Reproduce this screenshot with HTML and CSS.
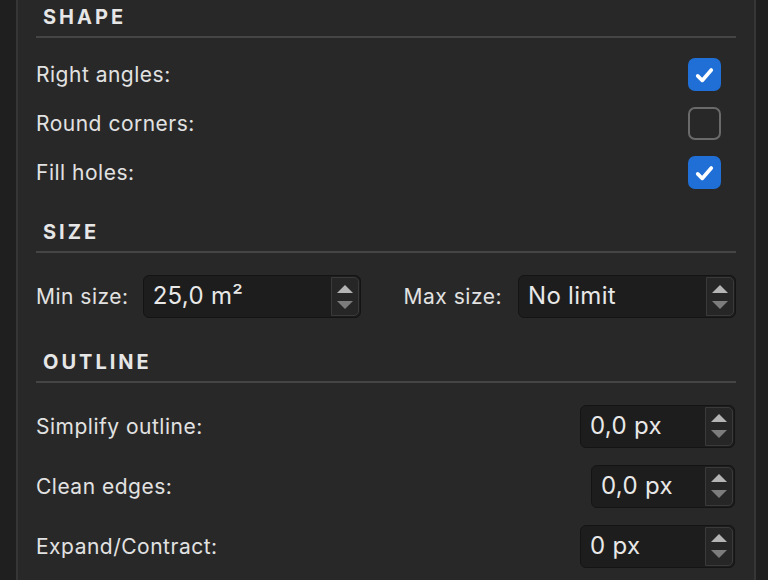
FILE: index.html
```html
<!DOCTYPE html>
<html lang="en">
<head>
    <meta charset="UTF-8">
    <title>Shape options</title>
    <link rel="stylesheet" href="styles.css">
</head>
<body>
    <div class="window">
        <div class="side side-left"></div>

        <div class="panel">
            <!-- Shape -->
            <div class="section">
                <div class="section-title">Shape</div>
                <div class="section-body body-shape">
                    <div class="row row-check">
                        <span class="label">Right angles:</span>
                        <span class="checkbox checked">
                            <svg viewBox="0 0 32 32" width="32" height="32"><path d="M8.5 17 L13.5 22 L23.5 10.5" fill="none" stroke="#fff" stroke-width="4" stroke-linecap="round" stroke-linejoin="round"/></svg>
                        </span>
                    </div>
                    <div class="row row-check">
                        <span class="label">Round corners:</span>
                        <span class="checkbox"></span>
                    </div>
                    <div class="row row-check">
                        <span class="label">Fill holes:</span>
                        <span class="checkbox checked">
                            <svg viewBox="0 0 32 32" width="32" height="32"><path d="M8.5 17 L13.5 22 L23.5 10.5" fill="none" stroke="#fff" stroke-width="4" stroke-linecap="round" stroke-linejoin="round"/></svg>
                        </span>
                    </div>
                </div>
            </div>

            <!-- Size -->
            <div class="section section-size">
                <div class="section-title">Size</div>
                <div class="section-body body-size">
                    <div class="row row-size">
                        <div class="field-group">
                            <span class="label">Min size:</span>
                            <div class="spin spin-size">
                                <span class="spin-value">25,0 m²</span>
                                <span class="stepper">
                                    <svg viewBox="0 0 16 8" width="16" height="8"><path d="M0 8 L8 0 L16 8 Z" fill="#b4b4b4"/></svg>
                                    <svg viewBox="0 0 16 8" width="16" height="8"><path d="M0 0 L16 0 L8 8 Z" fill="#7c7c7c"/></svg>
                                </span>
                            </div>
                        </div>
                        <div class="field-group group-right">
                            <span class="label">Max size:</span>
                            <div class="spin spin-size">
                                <span class="spin-value">No limit</span>
                                <span class="stepper">
                                    <svg viewBox="0 0 16 8" width="16" height="8"><path d="M0 8 L8 0 L16 8 Z" fill="#b4b4b4"/></svg>
                                    <svg viewBox="0 0 16 8" width="16" height="8"><path d="M0 0 L16 0 L8 8 Z" fill="#7c7c7c"/></svg>
                                </span>
                            </div>
                        </div>
                    </div>
                </div>
            </div>

            <!-- Outline -->
            <div class="section section-outline">
                <div class="section-title">Outline</div>
                <div class="section-body body-outline">
                    <div class="row row-field">
                        <span class="label">Simplify outline:</span>
                        <div class="spin spin-wide">
                            <span class="spin-value">0,0 px</span>
                            <span class="stepper">
                                <svg viewBox="0 0 16 8" width="16" height="8"><path d="M0 8 L8 0 L16 8 Z" fill="#b4b4b4"/></svg>
                                <svg viewBox="0 0 16 8" width="16" height="8"><path d="M0 0 L16 0 L8 8 Z" fill="#7c7c7c"/></svg>
                            </span>
                        </div>
                    </div>
                    <div class="row row-field">
                        <span class="label">Clean edges:</span>
                        <div class="spin spin-narrow">
                            <span class="spin-value">0,0 px</span>
                            <span class="stepper">
                                <svg viewBox="0 0 16 8" width="16" height="8"><path d="M0 8 L8 0 L16 8 Z" fill="#b4b4b4"/></svg>
                                <svg viewBox="0 0 16 8" width="16" height="8"><path d="M0 0 L16 0 L8 8 Z" fill="#7c7c7c"/></svg>
                            </span>
                        </div>
                    </div>
                    <div class="row row-field">
                        <span class="label">Expand/Contract:</span>
                        <div class="spin spin-wide">
                            <span class="spin-value">0 px</span>
                            <span class="stepper">
                                <svg viewBox="0 0 16 8" width="16" height="8"><path d="M0 8 L8 0 L16 8 Z" fill="#b4b4b4"/></svg>
                                <svg viewBox="0 0 16 8" width="16" height="8"><path d="M0 0 L16 0 L8 8 Z" fill="#7c7c7c"/></svg>
                            </span>
                        </div>
                    </div>
                </div>
            </div>
        </div>

        <div class="side side-right"></div>
    </div>
</body>
</html>
```

FILE: styles.css
```css
html, body {
    margin: 0;
    height: 100%;
    overflow: hidden;
}

body {
    font-family: Inter, "Noto Sans", sans-serif;
    background-color: #1f1f1f;
    color: #e2e2e2;
}

.window {
    display: flex;
    height: 100%;
}

.side {
    background-color: #1f1f1f;
}

.side-left {
    width: 16px;
    border-right: 2px solid #363636;
}

.side-right {
    flex: 1;
    border-left: 2px solid #363636;
}

.panel {
    width: 700px;
    background-color: #282828;
    padding: 5px 18px 0 18px;
}

.section-title {
    height: 24px;
    line-height: 24px;
    padding: 0 0 7px 7px;
    border-bottom: 2px solid #454545;
    font-size: 20px;
    font-weight: 700;
    letter-spacing: 3px;
    text-transform: uppercase;
    color: #e6e6e6;
}

.section-size {
    margin-top: 23px;
}

.section-outline {
    margin-top: 29px;
}

.body-shape {
    padding-top: 12px;
}

.body-size {
    padding-top: 19px;
}

.body-outline {
    padding-top: 13px;
}

.row {
    display: flex;
    align-items: center;
    justify-content: space-between;
}

.row-check {
    height: 49px;
}

.row-size {
    height: 49px;
}

.row-field {
    height: 60px;
}

.label {
    font-size: 21px;
    letter-spacing: 0.5px;
}

.checkbox {
    width: 33px;
    height: 33px;
    box-sizing: border-box;
    border-radius: 7px;
    border: 2px solid #6a6a6a;
    margin-right: 15px;
    display: flex;
    align-items: center;
    justify-content: center;
}

.checkbox.checked {
    background-color: #1f6fd6;
    border-color: #1f6fd6;
}

.field-group {
    display: flex;
    align-items: center;
    gap: 14px;
}

.group-right {
    gap: 16px;
}

.spin {
    display: flex;
    box-sizing: border-box;
    height: 43px;
    background-color: #1d1d1d;
    border: 1px solid #141414;
    border-radius: 6px;
}

.spin-size {
    width: 218px;
}

.spin-wide {
    width: 155px;
    margin-right: 1px;
}

.spin-narrow {
    width: 144px;
    margin-right: 1px;
}

.spin-value {
    flex: 1;
    padding-left: 9px;
    font-size: 24px;
    line-height: 40px;
    letter-spacing: 0.3px;
    color: #e8e8e8;
}

.stepper {
    width: 26px;
    margin: 1px;
    border: 1px solid #3a3a3a;
    border-radius: 0 5px 5px 0;
    background-color: #262626;
    display: flex;
    flex-direction: column;
    align-items: center;
    justify-content: center;
    gap: 8px;
}
```
